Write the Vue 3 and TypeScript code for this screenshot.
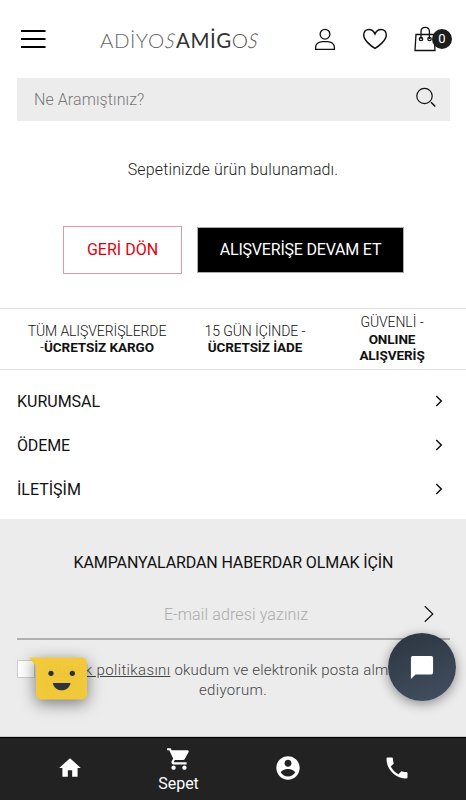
<script setup lang="ts">
interface Perk { lead: string; dash: string; strong: string; cls: string }
const perks: Perk[] = [
  { lead: 'TÜM ALIŞVERİŞLERDE', dash: '-', strong: 'ÜCRETSİZ KARGO', cls: 'perk-a' },
  { lead: '15 GÜN İÇİNDE -', dash: '', strong: 'ÜCRETSİZ İADE', cls: 'perk-b' },
  { lead: 'GÜVENLİ -', dash: '', strong: 'ONLINE ALIŞVERİŞ', cls: 'perk-c' },
]
const sections: { label: string; cls: string }[] = [
  { label: 'KURUMSAL', cls: 's-a' },
  { label: 'ÖDEME', cls: 's-b' },
  { label: 'İLETİŞİM', cls: 's-c' },
]
</script>

<template>
  <div class="page">
    <header class="header">
      <svg class="menu" width="26" height="20" viewBox="0 0 26 20"><path d="M1 2h24.500M1 10h24.500M1 18h24.500" stroke="#000" stroke-width="1.800" /></svg>
      <div class="logo"><span class="logo-light">ADİYO<i>S</i></span><span class="logo-dark">AMİG</span><span class="logo-mid">O<i>S</i></span></div>
      <div class="actions">
        <svg class="user" width="22" height="24" viewBox="0 0 22 24" fill="none" stroke="#111" stroke-width="1.300"><circle cx="11" cy="6.200" r="4.900" /><path d="M1.600 21.400v-2c0-3.200 3-5.700 6.800-5.700h5.200c3.800 0 6.800 2.500 6.800 5.700v2z" /></svg>
        <svg class="heart" width="26" height="22" viewBox="0 0 26 22" fill="none" stroke="#111" stroke-width="1.500"><path d="M13 20.400C10 18.800 1.700 12.500 1.700 6.900 1.700 3.500 4.100 1.400 7 1.400c2.600 0 4.700 1.500 6 4.500 1.300-3 3.400-4.500 6-4.500 2.900 0 5.300 2.100 5.300 5.500 0 5.600-8.300 11.900-11.300 13.500z" /></svg>
        <div class="bag">
          <svg width="24" height="26" viewBox="0 0 24 26" fill="none" stroke="#111" stroke-width="1.300"><path d="M2 8.500h18l1 16H1zM7 13V5.500C7 3 8.500 1.300 11.200 1.300s4.200 1.700 4.200 4.200V13" /><circle cx="7" cy="13" r="1.700" /><circle cx="15.500" cy="13" r="1.700" /></svg>
          <span class="count">0</span>
        </div>
      </div>
    </header>

    <div class="search">
      <span>Ne Aramıştınız?</span>
      <svg width="22" height="22" viewBox="0 0 22 22" fill="none" stroke="#111" stroke-width="1.200"><circle cx="9.500" cy="9" r="7.700" /><path d="M16 15.200l4.300 4.300" stroke-width="1.500" /></svg>
    </div>

    <main class="empty">
      <p><span>Sepetinizde ürün bulunamadı.</span></p>
      <div class="buttons">
        <button class="back"><span>GERİ DÖN</span></button>
        <button class="go"><span>ALIŞVERİŞE DEVAM ET</span></button>
      </div>
    </main>

    <section class="perks">
      <div v-for="p in perks" :key="p.strong" class="perk" :class="p.cls">
        <span class="lead">{{ p.lead }}</span>
        <div>{{ p.dash }}<b>{{ p.strong }}</b></div>
      </div>
    </section>

    <nav class="sections">
      <a v-for="s in sections" :key="s.label"><span :class="s.cls">{{ s.label }}</span>
        <svg width="8" height="12" viewBox="0 0 8 12" fill="none" stroke="#111" stroke-width="1.500"><path d="M1.300 1l5 5-5 5" /></svg>
      </a>
    </nav>

    <section class="news">
      <h2>KAMPANYALARDAN HABERDAR OLMAK İÇİN</h2>
      <div class="email">
        <span>E-mail adresi yazınız</span>
        <svg width="10" height="18" viewBox="0 0 10 18" fill="none" stroke="#111" stroke-width="1.200"><path d="M.8 1.300L8.800 9l-8 7.700" /></svg>
      </div>
      <div class="consent">
        <i class="box"></i>
        <div class="consent-text"><div class="line-a"><u>Gizlilik politikasını</u> <span>okudum ve elektronik posta almayı kabul</span></div><div class="line-b">ediyorum.</div></div>
      </div>
    </section>

    <footer class="tabs">
      <a class="home"><svg width="26" height="26" viewBox="0 0 24 24"><path d="M10 20v-6h4v6h5v-8h3L12 3 2 12h3v8z" /></svg></a>
      <a class="cart"><svg width="26" height="26" viewBox="0 0 24 24"><path d="M7 18c-1.100 0-1.990.9-1.990 2S5.900 22 7 22s2-.9 2-2-.9-2-2-2zM1 2v2h2l3.600 7.590-1.350 2.450c-.16.280-.25.610-.25.960 0 1.100.9 2 2 2h12v-2H7.420c-.14 0-.25-.11-.25-.25l.03-.12.900-1.630h7.450c.75 0 1.410-.41 1.750-1.030l3.580-6.490A1 1 0 0 0 20 4H5.210l-.94-2H1zm16 16c-1.100 0-1.990.9-1.990 2s.89 2 1.990 2 2-.9 2-2-.9-2-2-2z" /></svg><span>Sepet</span></a>
      <a class="account"><svg width="28" height="28" viewBox="0 0 24 24"><path d="M12 2C6.480 2 2 6.480 2 12s4.480 10 10 10 10-4.480 10-10S17.520 2 12 2zm0 3c1.660 0 3 1.340 3 3s-1.340 3-3 3-3-1.340-3-3 1.340-3 3-3zm0 14.200c-2.500 0-4.710-1.280-6-3.220.03-1.990 4-3.080 6-3.080 1.990 0 5.970 1.090 6 3.080-1.290 1.940-3.500 3.220-6 3.220z" /></svg></a>
      <a class="phone"><svg width="28" height="28" viewBox="0 0 24 24"><path d="M6.620 10.790c1.440 2.830 3.760 5.140 6.590 6.590l2.200-2.200c.27-.27.670-.36 1.020-.24 1.120.37 2.330.57 3.570.57.550 0 1 .45 1 1V20c0 .55-.45 1-1 1-9.390 0-17-7.610-17-17 0-.55.45-1 1-1h3.500c.55 0 1 .45 1 1 0 1.250.2 2.450.57 3.570.11.350.03.740-.25 1.020z" /></svg></a>
    </footer>

    <svg class="smile" width="60" height="44" viewBox="0 0 60 44"><path d="M1 .5h53a5 5 0 0 1 5 5v32a5 5 0 0 1-5 5H13a5 5 0 0 1-5-5V9z" fill="#f4c936" fill-opacity=".97" /><circle cx="23" cy="16.300" r="2.600" fill="#26303a" /><circle cx="44.300" cy="16.300" r="2.600" fill="#26303a" /><path d="M24.800 26h17.700c-.7 4.500-4.300 7.300-8.800 7.300S25.500 30.500 24.800 26z" fill="#2d343b" /></svg>
    <div class="chat"><svg width="24" height="24" viewBox="0 0 26 26"><path d="M3 1h20a2 2 0 0 1 2 2v16a2 2 0 0 1-2 2H6l-5 5V3a2 2 0 0 1 2-2z" fill="#fff" /></svg></div>
  </div>
</template>

<style>
body { margin: 0; overflow: hidden; }
</style>
<style scoped>
* { box-sizing: border-box; }
.page { position: relative; width: 466px; height: 800px; overflow: hidden; background: #fff; color: #111; font-family: Roboto, "Liberation Sans", sans-serif; font-size: 16px; }
svg { display: block; flex: none; }
.page span, .page h2, .page div, .page b { white-space: nowrap; }
.header { display: flex; height: 78px; padding-left: 20px; }
.menu { margin-top: 29px; }
.logo { width: 160px; margin: 26px 0 0 54px; font: 300 20.500px/28px Lato, sans-serif; letter-spacing: .5px; display: flex; }
.logo-light { color: #666; }
.logo-mid { color: #555; }
.logo-dark { color: #333; font-weight: 400; }
.logo i { display: inline-block; transform: skewX(-14deg) scaleX(.85); font-style: normal; }
.actions { display: flex; margin-left: 54px; }
.user { margin-top: 28px; }
.heart { margin: 28px 0 0 26px; }
.bag { position: relative; margin: 26px 0 0 26px; }
.count { position: absolute; left: 18px; top: 3px; width: 20px; height: 20px; border-radius: 50%; background: #1d1d1d; color: #fff; font-size: 13px; line-height: 20px; text-align: center; }
.search { display: flex; align-items: center; justify-content: space-between; height: 43px; margin: 0 16px 0 17px; padding: 0 13px 4px 17px; background: #ececec; color: #777; font-weight: 300; }
.search span { padding-top: 4px; letter-spacing: .08px; }
.empty { height: 187px; padding-top: 38px; }
.empty p { margin: 0; height: 67px; line-height: 22px; text-align: center; color: #222; font-weight: 300; letter-spacing: .13px; }
.buttons { display: flex; align-items: center; gap: 15px; padding-left: 63px; }
.buttons button { padding: 0; font: 400 16px/20px Roboto, sans-serif; text-align: center; }
.buttons .back { width: 119px; height: 48px; border: 1px solid #e09a9c; background: #fff; color: #e3000b; }
.buttons .go { width: 207px; height: 46px; border: 1px solid #aaa; background: #000; color: #fff; letter-spacing: -.2px; }
.perks { display: flex; align-items: center; height: 62px; padding: 0 15px 0 17px; border-top: 1px solid #e2e2e2; border-bottom: 1px solid #e2e2e2; font-size: 14px; line-height: 16.500px; font-weight: 300; text-align: center; letter-spacing: -.08px; }
.perk-a { width: 160px; }
.perk-b { width: 156px; }
.perk-c { width: 118px; padding: 0 20px; }
.perk-c div, .perk-c b { white-space: normal; }
.perk b { font-weight: 700; font-size: 13.500px; }
.sections { height: 149px; padding: 9px 23px 0 17px; }
.sections a { display: flex; height: 44px; align-items: center; justify-content: space-between; }
.s-b { letter-spacing: -.15px; }
.news { height: 218px; padding: 33px 16px 0 17px; background: #ececec; border-bottom: 1px solid #ccc; text-align: center; }
.news h2 { margin: 0; font-size: 16px; line-height: 22px; font-weight: 400; letter-spacing: -.12px; }
.email { display: flex; align-items: center; justify-content: flex-end; height: 66px; padding: 16px 16px 0 0; border-bottom: 2px solid #b0b0b0; color: #aaa; font-weight: 300; }
.email span { flex: 1; padding-left: 31px; letter-spacing: .12px; }
.consent { display: flex; padding-top: 20px; color: #444; font-size: 15px; line-height: 20px; font-weight: 300; }
.box { flex: none; width: 18px; height: 18px; border: 1px solid #ccc; background: #fff; }
.consent-text { margin-left: 13px; width: 370px; letter-spacing: .35px; }
.line-a { text-align: left; }
.line-a span { letter-spacing: .18px; }
.tabs { display: flex; height: 63px; border-top: 1px solid #000; background: #222; color: #fff; fill: #fff; }
.tabs a { display: flex; flex-direction: column; align-items: center; width: 109px; }
.tabs .home { margin-left: 15px; padding-top: 17px; }
.cart { padding-top: 8px; }
.cart span { line-height: 20px; margin-top: 2px; }
.account, .phone { padding-top: 16px; }
.smile { position: absolute; left: 28px; top: 657px; overflow: visible; filter: drop-shadow(0 4px 8px rgba(0,0,0,.5)); }
.chat { position: absolute; left: 388px; top: 633px; width: 68px; height: 68px; border-radius: 50%; background: linear-gradient(160deg, #2c3540, #435062); display: flex; align-items: center; justify-content: center; box-shadow: 0 3px 12px rgba(0,0,0,.4); }
</style>
